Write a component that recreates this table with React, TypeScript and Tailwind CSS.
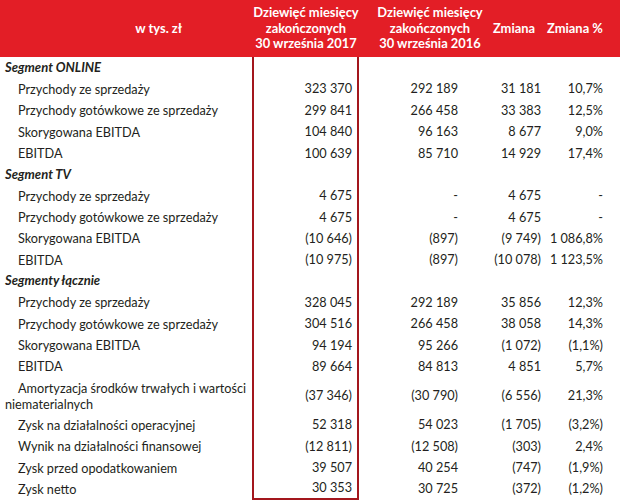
import React from 'react'

type Row =
  | { kind: 'section'; label: string }
  | { kind: 'item'; label: string; v: [string, string, string, string]; tall?: boolean }

const ROWS: Row[] = [
  { kind: 'section', label: 'Segment ONLINE' },
  { kind: 'item', label: 'Przychody ze sprzedaży', v: ['323 370', '292 189', '31 181', '10,7%'] },
  { kind: 'item', label: 'Przychody gotówkowe ze sprzedaży', v: ['299 841', '266 458', '33 383', '12,5%'] },
  { kind: 'item', label: 'Skorygowana EBITDA', v: ['104 840', '96 163', '8 677', '9,0%'] },
  { kind: 'item', label: 'EBITDA', v: ['100 639', '85 710', '14 929', '17,4%'] },
  { kind: 'section', label: 'Segment TV' },
  { kind: 'item', label: 'Przychody ze sprzedaży', v: ['4 675', '-', '4 675', '-'] },
  { kind: 'item', label: 'Przychody gotówkowe ze sprzedaży', v: ['4 675', '-', '4 675', '-'] },
  { kind: 'item', label: 'Skorygowana EBITDA', v: ['(10 646)', '(897)', '(9 749)', '1 086,8%'] },
  { kind: 'item', label: 'EBITDA', v: ['(10 975)', '(897)', '(10 078)', '1 123,5%'] },
  { kind: 'section', label: 'Segmenty łącznie' },
  { kind: 'item', label: 'Przychody ze sprzedaży', v: ['328 045', '292 189', '35 856', '12,3%'] },
  { kind: 'item', label: 'Przychody gotówkowe ze sprzedaży', v: ['304 516', '266 458', '38 058', '14,3%'] },
  { kind: 'item', label: 'Skorygowana EBITDA', v: ['94 194', '95 266', '(1 072)', '(1,1%)'] },
  { kind: 'item', label: 'EBITDA', v: ['89 664', '84 813', '4 851', '5,7%'] },
  {
    kind: 'item',
    label: 'Amortyzacja środków trwałych i wartości niematerialnych',
    v: ['(37 346)', '(30 790)', '(6 556)', '21,3%'],
    tall: true,
  },
  { kind: 'item', label: 'Zysk na działalności operacyjnej', v: ['52 318', '54 023', '(1 705)', '(3,2%)'] },
  { kind: 'item', label: 'Wynik na działalności finansowej', v: ['(12 811)', '(12 508)', '(303)', '2,4%'] },
  { kind: 'item', label: 'Zysk przed opodatkowaniem', v: ['39 507', '40 254', '(747)', '(1,9%)'] },
  { kind: 'item', label: 'Zysk netto', v: ['30 353', '30 725', '(372)', '(1,2%)'] },
]

export default function App() {
  return (
    <div className="w-[620px] h-[501px] overflow-hidden bg-white text-[#231f20] text-[12.7px] font-['Lato','Liberation_Sans',sans-serif]">
      {/* nagłówek */}
      <div className="flex h-[57px] items-center bg-[#e31e26] text-white font-bold leading-[15.5px] text-[12.9px]">
        <div className="w-[252px] pr-[70px] text-right">w tys. zł</div>
        <div className="w-[108px] text-center">
          Dziewięć miesięcy
          <br />
          zakończonych
          <br />
          30 września 2017
        </div>
        <div className="ml-[12px] w-[116px] text-center">
          Dziewięć miesięcy
          <br />
          zakończonych
          <br />
          30 września 2016
        </div>
        <div className="w-[52px] text-center">Zmiana</div>
        <div className="w-[70px] text-center">Zmiana %</div>
      </div>

      {ROWS.map((r, i) => {
        const last = i === ROWS.length - 1
        const h = r.kind === 'item' && r.tall ? 'h-[37px]' : 'h-[21.35px]'
        return (
          <div key={i} className={`flex ${h}`}>
            {r.kind === 'section' ? (
              <div className="w-[252px] pl-[5px] flex items-center font-bold italic text-[13px]">{r.label}</div>
            ) : (
              <div className="w-[252px] pl-[5px] flex items-center">
                <span className="block indent-[13px] leading-[16px]">{r.label}</span>
              </div>
            )}
            <div
              className={`w-[107px] border-x-2 border-[#a3171d] pr-[5px] flex items-center justify-end ${
                last ? 'border-b-2' : ''
              }`}
            >
              {r.kind === 'item' ? r.v[0] : ''}
            </div>
            {r.kind === 'item' && (
              <>
                <div className="w-[106px] pr-[7px] flex items-center justify-end">{r.v[1]}</div>
                <div className="w-[83px] pr-[7px] flex items-center justify-end">{r.v[2]}</div>
                <div className="w-[72px] pr-[17px] flex items-center justify-end">{r.v[3]}</div>
              </>
            )}
          </div>
        )
      })}
    </div>
  )
}
